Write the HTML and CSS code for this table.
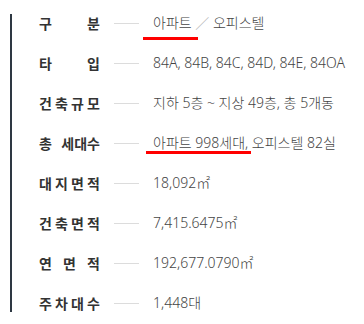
FILE: index.html
```html
<!DOCTYPE html>
<html lang="ko">
<head>
<meta charset="utf-8">
<link rel="stylesheet" href="styles.css">
</head>
<body>
<ul class="spec">
  <li class="row">
    <span class="label"><span>구</span><span>분</span></span>
    <span class="dash"></span>
    <span class="value"><span class="mark mark-a">아파트</span> <span class="slash">／</span> 오피스텔</span>
  </li>
  <li class="row">
    <span class="label"><span>타</span><span>입</span></span>
    <span class="dash"></span>
    <span class="value">84A, 84B, 84C, 84D, 84E, 84OA</span>
  </li>
  <li class="row">
    <span class="label"><span>건</span><span>축</span><span>규</span><span>모</span></span>
    <span class="dash"></span>
    <span class="value">지하 5층 ~ 지상 49층, 총 5개동</span>
  </li>
  <li class="row">
    <span class="label"><span>총</span><span>세대수</span></span>
    <span class="dash"></span>
    <span class="value"><span class="mark mark-b">아파트 998세대</span>, 오피스텔 82실</span>
  </li>
  <li class="row">
    <span class="label"><span>대</span><span>지</span><span>면</span><span>적</span></span>
    <span class="dash"></span>
    <span class="value">18,092㎡</span>
  </li>
  <li class="row">
    <span class="label"><span>건</span><span>축</span><span>면</span><span>적</span></span>
    <span class="dash"></span>
    <span class="value">7,415.6475㎡</span>
  </li>
  <li class="row">
    <span class="label"><span>연</span><span>면</span><span>적</span></span>
    <span class="dash"></span>
    <span class="value">192,677.0790㎡</span>
  </li>
  <li class="row">
    <span class="label"><span>주</span><span>차</span><span>대</span><span>수</span></span>
    <span class="dash"></span>
    <span class="value">1,448대</span>
  </li>
</ul>
</body>
</html>
```
FILE: styles.css
```css
html, body {
  margin: 0;
  padding: 0;
  background: #fff;
}
body {
  font-family: "Noto Sans", "Noto Sans CJK KR", sans-serif;
}
.spec {
  list-style: none;
  margin: 14px 0 0 10px;
  padding: 0 0 0 27px;
  border-left: 2px solid #2e3843;
  display: flex;
  flex-direction: column;
  gap: 22px;
}
.row {
  display: flex;
  align-items: center;
  height: 18px;
  line-height: 18px;
}
.label {
  width: 61px;
  display: flex;
  justify-content: space-between;
  font-family: "Noto Sans CJK KR", sans-serif;
  font-weight: 700;
  font-size: 14px;
  color: #333;
}
.dash {
  width: 25px;
  height: 1px;
  background: #dcdcdc;
  margin: 0 14px;
}
.value {
  font-size: 14px;
  font-weight: 300;
  color: #444;
  white-space: nowrap;
}
.slash {
  color: #b5b5b5;
}
.mark {
  position: relative;
}
.mark::after {
  content: "";
  position: absolute;
  height: 3px;
  background: #f00;
}
.mark-a::after {
  left: -10px;
  width: 55px;
  top: 24px;
}
.mark-b::after {
  left: -7px;
  width: 105px;
  top: 18px;
}
```
